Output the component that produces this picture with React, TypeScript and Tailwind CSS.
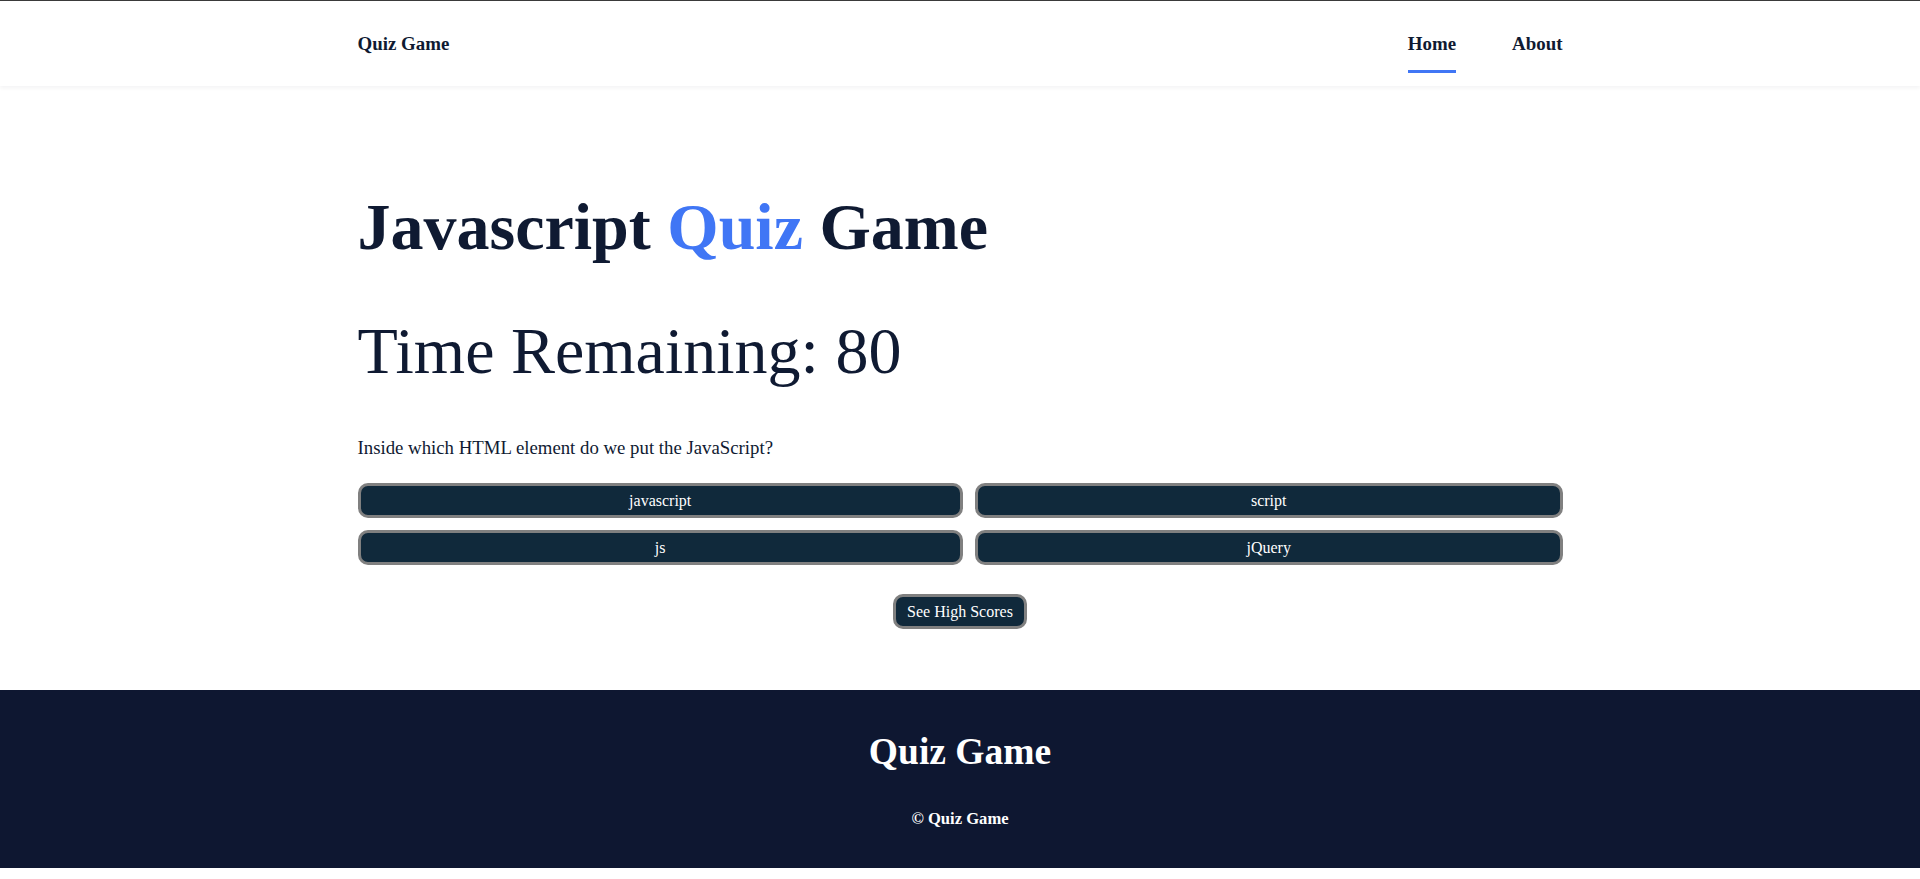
import { useState } from "react";

const options = ["javascript", "script", "js", "jQuery"];

const NavBar = () => {
  const [active, setActive] = useState("Home");

  return (
    <header className="h-[86px] border-t border-[#3a3a3a] bg-white shadow-[0_2px_4px_rgba(15,23,42,0.05)]">
      <div className="mx-auto flex h-full w-[1205px] items-center justify-between">
        <a href="#" className="text-[18.9px] font-bold leading-6 text-[#0f1a32]">
          Quiz Game
        </a>
        <nav className="flex items-center gap-[56px]">
          {["Home", "About"].map((item) => (
            <a
              key={item}
              href="#"
              onClick={() => setActive(item)}
              className="relative text-[18.9px] font-bold leading-6 text-[#0f1a32]"
            >
              {item}
              {active === item && (
                <span className="absolute left-0 right-0 top-[38px] h-[3px] bg-[#4076f5]" />
              )}
            </a>
          ))}
        </nav>
      </div>
    </header>
  );
};

const Quiz = () => {
  return (
    <main className="mx-auto w-[1205px] pt-[103px] pb-[61px] text-[#0f1a32]">
      <h1 className="text-[66px] font-bold leading-[76px]">
        Javascript <span className="text-[#4076f5]">Quiz</span> Game
      </h1>

      <h2 className="mt-[48px] text-[66px] font-normal leading-[76px]">
        Time Remaining: 80
      </h2>

      <p className="mt-[45px] text-[18.8px] leading-[27px]">
        Inside which HTML element do we put the JavaScript?
      </p>

      {/* answer choices */}
      <div className="mt-[22px] grid grid-cols-[auto_auto] gap-3">
        {options.map((opt) => (
          <button
            key={opt}
            className="h-[35px] rounded-[10px] border-[3px] border-[#808080] bg-[#10293b] px-[11px] text-base leading-6 text-white"
          >
            {opt}
          </button>
        ))}
      </div>

      <div className="mt-[29px] flex justify-center">
        <button className="h-[35px] rounded-[10px] border-[3px] border-[#808080] bg-[#10293b] px-[11px] text-base leading-6 text-white">
          See High Scores
        </button>
      </div>
    </main>
  );
};

const Footer = () => (
  <footer className="bg-[#0e1731] pt-[39px] pb-[37px] text-center text-white">
    <h2 className="text-[37.5px] font-bold leading-[45px]">Quiz Game</h2>
    <p className="mt-[33px] text-[16.6px] font-bold leading-6">© Quiz Game</p>
  </footer>
);

export default function App() {
  return (
    <div className="bg-white font-['Liberation_Serif','Times_New_Roman',serif]">
      <NavBar />
      <Quiz />
      <Footer />
    </div>
  );
}
